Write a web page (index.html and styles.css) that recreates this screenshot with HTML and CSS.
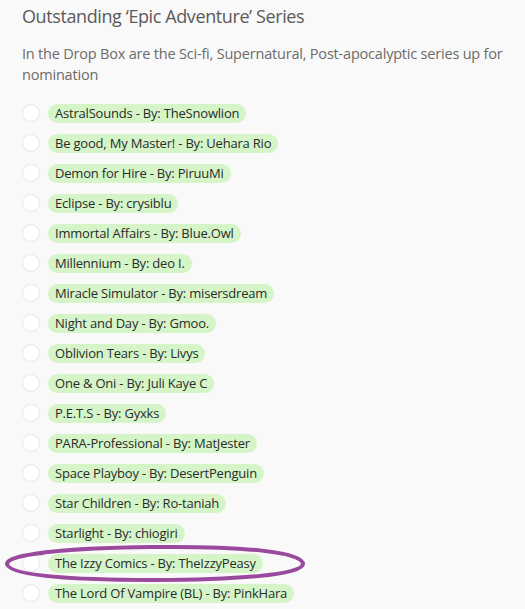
FILE: index.html
```html
<!DOCTYPE html>
<html lang="en">

<head>
    <meta charset="UTF-8">
    <meta name="viewport" content="width=device-width, initial-scale=1.0">
    <title>Outstanding 'Epic Adventure' Series</title>
    <link rel="stylesheet" href="styles.css">
</head>

<body>
    <div class="question">
        <h1 class="question-title">Outstanding ‘Epic Adventure’ Series</h1>
        <p class="question-desc">In the Drop Box are the Sci-fi, Supernatural, Post-apocalyptic series up for nomination</p>

        <ul class="choices">
            <li class="choice"><input type="radio" name="epic" id="c1"><label for="c1">AstralSounds - By: TheSnowlion</label></li>
            <li class="choice"><input type="radio" name="epic" id="c2"><label for="c2">Be good, My Master! - By: Uehara Rio</label></li>
            <li class="choice"><input type="radio" name="epic" id="c3"><label for="c3">Demon for Hire - By: PiruuMi</label></li>
            <li class="choice"><input type="radio" name="epic" id="c4"><label for="c4">Eclipse - By: crysiblu</label></li>
            <li class="choice"><input type="radio" name="epic" id="c5"><label for="c5">Immortal Affairs - By: Blue.Owl</label></li>
            <li class="choice"><input type="radio" name="epic" id="c6"><label for="c6">Millennium - By: deo I.</label></li>
            <li class="choice"><input type="radio" name="epic" id="c7"><label for="c7">Miracle Simulator - By: misersdream</label></li>
            <li class="choice"><input type="radio" name="epic" id="c8"><label for="c8">Night and Day - By: Gmoo.</label></li>
            <li class="choice"><input type="radio" name="epic" id="c9"><label for="c9">Oblivion Tears - By: Livys</label></li>
            <li class="choice"><input type="radio" name="epic" id="c10"><label for="c10">One &amp; Oni - By: Juli Kaye C</label></li>
            <li class="choice"><input type="radio" name="epic" id="c11"><label for="c11">P.E.T.S - By: Gyxks</label></li>
            <li class="choice"><input type="radio" name="epic" id="c12"><label for="c12">PARA-Professional - By: MatJester</label></li>
            <li class="choice"><input type="radio" name="epic" id="c13"><label for="c13">Space Playboy - By: DesertPenguin</label></li>
            <li class="choice"><input type="radio" name="epic" id="c14"><label for="c14">Star Children - By: Ro-taniah</label></li>
            <li class="choice"><input type="radio" name="epic" id="c15"><label for="c15">Starlight - By: chiogiri</label></li>
            <li class="choice marked">
                <input type="radio" name="epic" id="c16"><label for="c16">The Izzy Comics - By: TheIzzyPeasy</label>
                <!-- hand drawn circle around the pick -->
                <svg class="scribble" width="306" height="40" viewBox="0 0 306 40">
                    <path d="M4 21 C6 10 70 5 150 4 C240 3 300 9 300 21 C300 32 230 37 150 37 C70 37 6 33 4 21 C3 16 20 12 40 10"
                        fill="none" stroke="#994a9c" stroke-width="4" stroke-linecap="round" />
                </svg>
            </li>
            <li class="choice"><input type="radio" name="epic" id="c17"><label for="c17">The Lord Of Vampire (BL) - By: PinkHara</label></li>
        </ul>
    </div>
</body>

</html>
```

FILE: styles.css
```css
body {
    margin: 0;
    background-color: #f9f9f9;
    font-family: "Open Sans", "Noto Sans", Arial, sans-serif;
}

.question {
    padding: 4px 10px 0 22px;
}

.question-title {
    margin: 0;
    font-size: 18px;
    font-weight: 400;
    line-height: 24px;
    color: #5a5a5a;
    letter-spacing: -0.4px;
}

.question-desc {
    margin: 15px 0 13px;
    font-size: 14.5px;
    line-height: 21px;
    color: #6b6b6b;
    letter-spacing: -0.2px;
}

.choices {
    list-style: none;
    margin: 0;
    padding: 0;
}

.choice {
    position: relative;
    display: flex;
    align-items: center;
    gap: 8px;
    height: 30px;
}

.choice input[type="radio"] {
    appearance: none;
    -webkit-appearance: none;
    margin: 0;
    width: 18px;
    height: 18px;
    border-radius: 50%;
    border: 1px solid #e6e6e6;
    background-color: #ffffff;
    flex-shrink: 0;
}

.choice label {
    background-color: #d5f5c8;
    color: #2b2b2b;
    font-size: 13px;
    line-height: 19px;
    padding: 0 7px;
    border-radius: 10px;
    letter-spacing: -0.2px;
}

.scribble {
    position: absolute;
    left: -19px;
    top: -5px;
}
```
